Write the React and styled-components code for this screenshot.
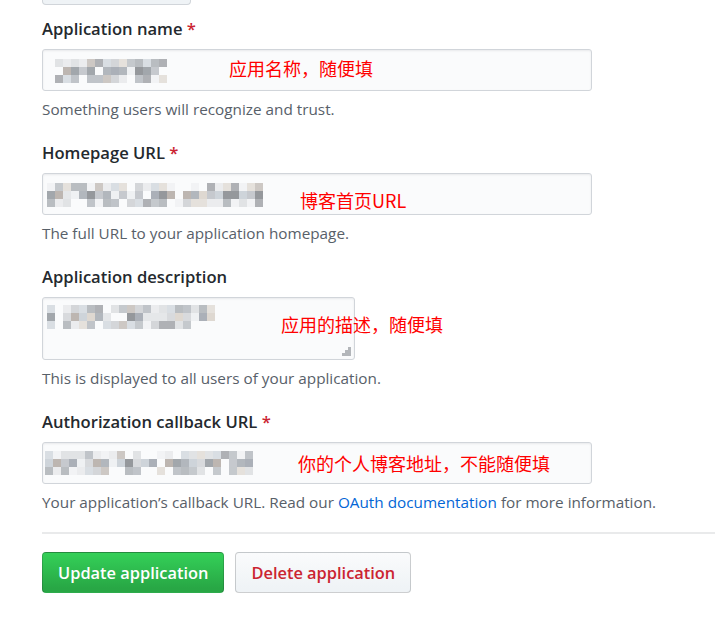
import React from "react";
import styled, { createGlobalStyle } from "styled-components";

const GlobalStyle = createGlobalStyle`
  html, body {
    margin: 0;
    padding: 0;
    background: #ffffff;
  }
  body {
    font-family: "Open Sans", "Noto Sans", "Noto Sans CJK SC", sans-serif;
    color: #24292e;
  }
`;

const MOSAICS = {
  name: { cols: 14, rows: 3, seed: 3, dx: 12, dy: 9 },
  home: { cols: 27, rows: 3, seed: 11, dx: 4, dy: 9 },
  desc: { cols: 21, rows: 3, seed: 7, dx: 4, dy: 7 },
  callback: { cols: 26, rows: 3, seed: 19, dx: 2, dy: 8 }
};

const SHADES = ["#c3c6cb", "#aeb3b9", "#d6d8db", "#9da2a8", "#e4e6e8", "#b9b2ad", "#cbd2d8", "#8f9297", "#dcd6cf", "#eef0f2", "#a7acb4"];

function Mosaic({ kind }) {
  const m = MOSAICS[kind];
  let s = m.seed;
  const rnd = () => {
    s = (s * 9301 + 49297) % 233280;
    return s / 233280;
  };
  const rects = [];
  for (let r = 0; r < m.rows; r++) {
    for (let c = 0; c < m.cols; c++) {
      const v = rnd();
      if (v < 0.12) continue;
      rects.push(
        <rect
          key={r + "-" + c}
          x={c * 8}
          y={r * 8}
          width="8"
          height="8"
          fill={SHADES[Math.floor(rnd() * SHADES.length)]}
          opacity={r === 1 ? 0.95 : 0.7}
        />
      );
    }
  }
  return (
    <Pixels width={m.cols * 8} height={m.rows * 8} $dx={m.dx} $dy={m.dy}>
      {rects}
    </Pixels>
  );
}

function Group({ label, required, field, note, last }) {
  return (
    <FormGroup $last={last}>
      <Label>
        {label}
        {required && <Required> *</Required>}
      </Label>
      {field}
      <Note>{note}</Note>
    </FormGroup>
  );
}

function App() {
  return (
    <>
      <GlobalStyle />
      <Page>
        <Stub />
        <Group
          label="Application name"
          required
          field={
            <Field>
              <Mosaic kind="name" />
              <Hint $left={186} $top={7}>应用名称，随便填</Hint>
            </Field>
          }
          note="Something users will recognize and trust."
        />
        <Group
          label="Homepage URL"
          required
          field={
            <Field>
              <Mosaic kind="home" />
              <Hint $left={257} $top={15}>博客首页URL</Hint>
            </Field>
          }
          note="The full URL to your application homepage."
        />
        <Group
          label="Application description"
          field={
            <TextArea>
              <Mosaic kind="desc" />
              <Hint $left={238} $top={15}>应用的描述，随便填</Hint>
              <Grip viewBox="0 0 9 9" width="9" height="9">
                <rect x="6" y="0" width="3" height="3" />
                <rect x="3" y="3" width="3" height="3" />
                <rect x="6" y="3" width="3" height="3" />
                <rect x="0" y="6" width="3" height="3" />
                <rect x="3" y="6" width="3" height="3" />
                <rect x="6" y="6" width="3" height="3" />
              </Grip>
            </TextArea>
          }
          note="This is displayed to all users of your application."
        />
        <Group
          label="Authorization callback URL"
          required
          last
          field={
            <Field>
              <Mosaic kind="callback" />
              <Hint $left={255} $top={9}>你的个人博客地址，不能随便填</Hint>
            </Field>
          }
          note={
            <>
              Your application’s callback URL. Read our{" "}
              <Link href="#">OAuth documentation</Link> for more information.
            </>
          }
        />
        <Divider />
        <Actions>
          <Button $primary>Update application</Button>
          <Button>Delete application</Button>
        </Actions>
      </Page>
    </>
  );
}

const Page = styled.div`
  display: flex;
  flex-direction: column;
  padding-left: 42px;
  width: 673px;
  height: 617px;
  overflow: hidden;
`;

const Stub = styled.div`
  width: 147px;
  height: 4px;
  background: #eff3f6;
  border: 1px solid #d1d5da;
  border-top: none;
  border-radius: 0 0 4px 4px;
  margin-bottom: 12px;
`;

const FormGroup = styled.div`
  display: flex;
  flex-direction: column;
  margin-bottom: ${(p) => (p.$last ? "0" : "21px")};
`;

const Label = styled.div`
  font-size: 16.6px;
  font-weight: 600;
  line-height: 24px;
  height: 24px;
  margin-bottom: 8px;
  color: #24292e;
`;

const Required = styled.span`
  color: #cb2431;
`;

const Field = styled.div`
  position: relative;
  box-sizing: border-box;
  width: 550px;
  height: 42px;
  background: #fafbfc;
  border: 1px solid #d1d5da;
  border-radius: 3px;
  box-shadow: inset 0 1px 2px rgba(27, 31, 35, 0.075);
`;

const TextArea = styled(Field)`
  width: 313px;
  height: 63px;
`;

const Pixels = styled.svg`
  position: absolute;
  left: ${(p) => p.$dx}px;
  top: ${(p) => p.$dy}px;
  filter: blur(0.5px);
`;

const Hint = styled.span`
  position: absolute;
  left: ${(p) => p.$left}px;
  top: ${(p) => p.$top}px;
  white-space: nowrap;
  font-family: "Noto Sans CJK SC", "Liberation Sans", sans-serif;
  font-size: 18px;
  line-height: 22px;
  color: #ff0000;
`;

const Grip = styled.svg`
  position: absolute;
  right: 3px;
  bottom: 3px;
  fill: #b3b6ba;
`;

const Note = styled.div`
  margin-top: 7px;
  font-size: 15.3px;
  line-height: 22px;
  color: #586069;
`;

const Link = styled.a`
  color: #0366d6;
  text-decoration: none;
`;

const Divider = styled.div`
  height: 0;
  border-top: 2px solid #e9eaeb;
  margin: 19px -42px 18px 0;
`;

const Actions = styled.div`
  display: flex;
  gap: 11px;
`;

const Button = styled.button`
  box-sizing: border-box;
  height: 41px;
  padding: 0 15px;
  font-family: inherit;
  font-size: 16.4px;
  font-weight: 600;
  border-radius: 4px;
  border: 1px solid rgba(27, 31, 35, 0.2);
  color: ${(p) => (p.$primary ? "#ffffff" : "#cb2431")};
  background: ${(p) =>
    p.$primary
      ? "linear-gradient(180deg, #34d058 0%, #28a745 90%)"
      : "linear-gradient(180deg, #fafbfc 0%, #eff3f6 90%)"};
  cursor: pointer;
`;

export default App;
